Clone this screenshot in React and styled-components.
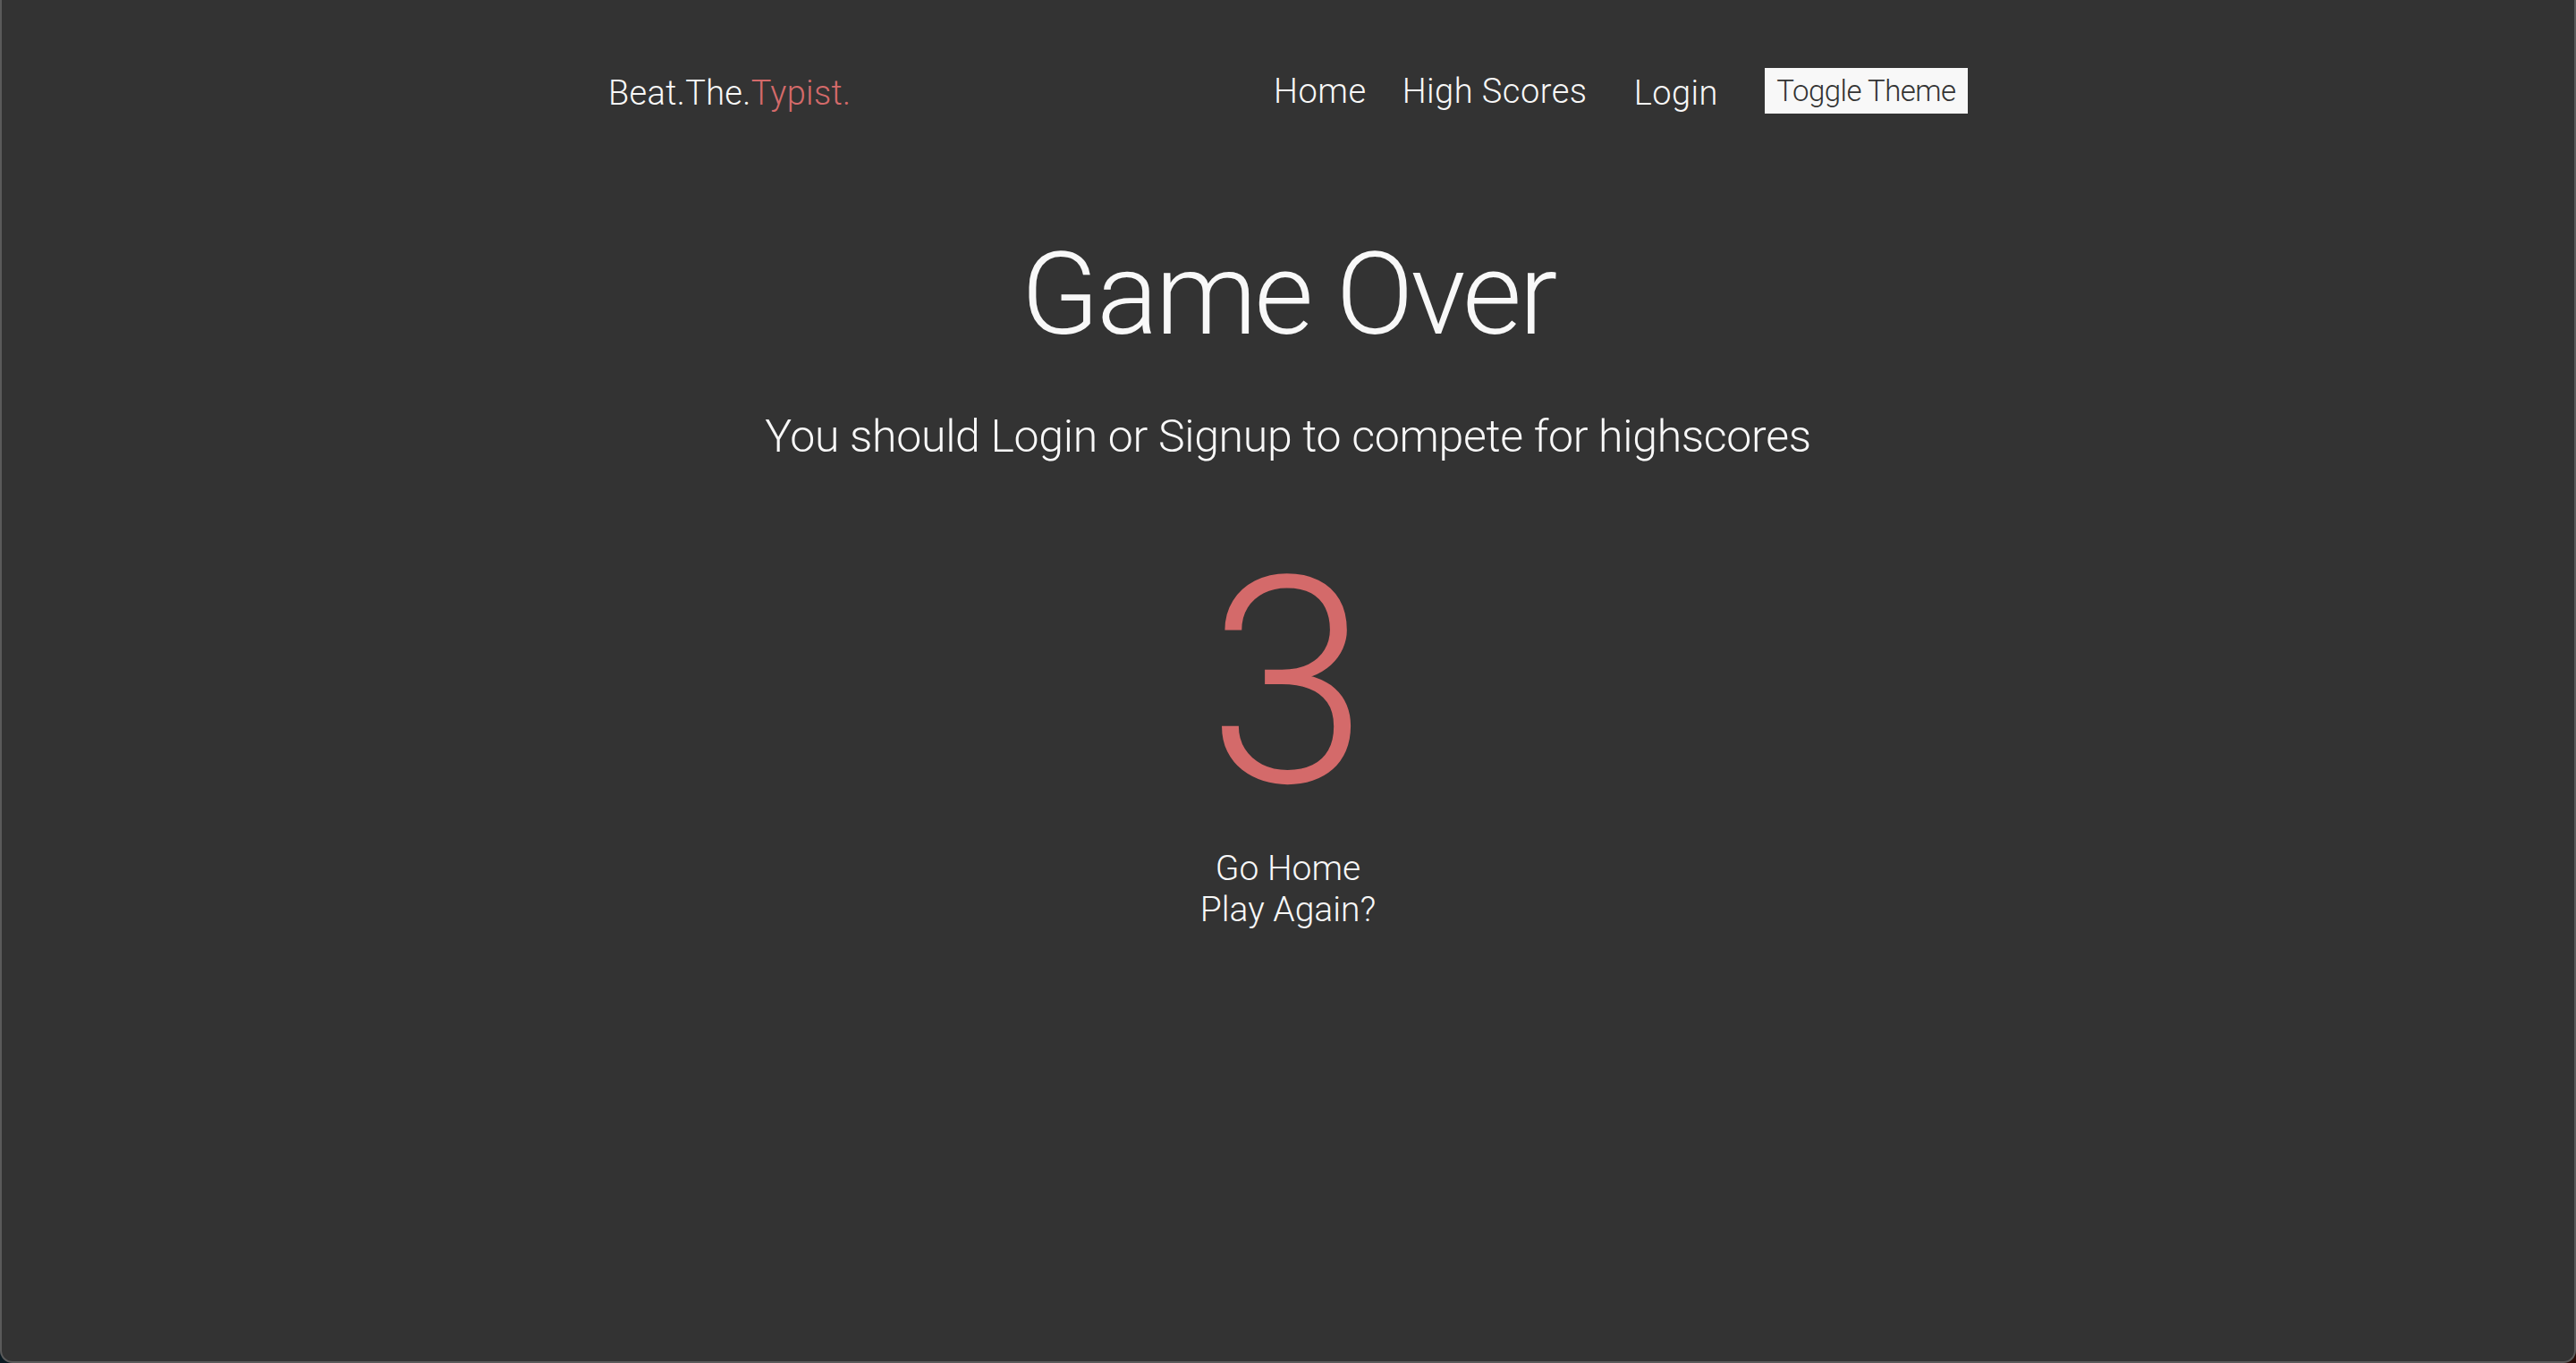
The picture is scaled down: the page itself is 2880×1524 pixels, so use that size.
import styled, { createGlobalStyle } from 'styled-components';

const GlobalStyle = createGlobalStyle`
  html, body {
    margin: 0;
    padding: 0;
    height: 100%;
    background: linear-gradient(90deg, #0b1a22 0%, #2a0d08 100%);
  }
  #root {
    height: 100%;
  }
  * {
    box-sizing: border-box;
  }
`;

const App = () => {
  const score = 3;

  return (
    <>
      <GlobalStyle />
      <WindowStyles>
        <Header>
          <Logo>
            Beat.The.<span>Typist.</span>
          </Logo>
          <Nav>
            <NavLink href="#">Home</NavLink>
            <NavLink href="#">High Scores</NavLink>
            <NavLink href="#" $spaced>
              Login
            </NavLink>
            <ThemeButton type="button">Toggle Theme</ThemeButton>
          </Nav>
        </Header>
        <Main>
          <Title>Game Over</Title>
          <Message>You should Login or Signup to compete for highscores</Message>
          <Score>{score}</Score>
          <Actions>
            <ActionLink href="#">Go Home</ActionLink>
            <ActionLink href="#">Play Again?</ActionLink>
          </Actions>
        </Main>
      </WindowStyles>
    </>
  );
};

const WindowStyles = styled.div`
  height: 100%;
  background: #333333;
  color: #f8f8f8;
  font-family: Roboto, 'Liberation Sans', sans-serif;
  font-weight: 300;
  border: 2px solid #5a5a5a;
  border-top: none;
  border-radius: 0 0 14px 14px;
  overflow: hidden;
`;

const Header = styled.header`
  width: 1520px;
  margin: 0 auto;
  padding-top: 76px;
  display: flex;
  align-items: center;
  justify-content: space-between;
`;

const Logo = styled.div`
  font-size: 38px;
  letter-spacing: 0.3px;
  padding-top: 4px;

  span {
    color: #d46a6a;
  }
`;

const Nav = styled.nav`
  display: flex;
  align-items: center;
  gap: 40px;
`;

const NavLink = styled.a`
  color: #f8f8f8;
  text-decoration: none;
  font-size: 38px;
  letter-spacing: 0.5px;
  margin-left: ${(p) => (p.$spaced ? '12px' : '0')};
  margin-right: ${(p) => (p.$spaced ? '12px' : '0')};
  padding-top: ${(p) => (p.$spaced ? '4px' : '0')};
`;

const ThemeButton = styled.button`
  height: 51px;
  width: 227px;
  padding: 0 12px;
  border: none;
  background: #f8f8f8;
  color: #333333;
  font-family: inherit;
  font-weight: 300;
  font-size: 33px;
  letter-spacing: -0.5px;
`;

const Main = styled.main`
  display: flex;
  flex-direction: column;
  align-items: center;
  text-align: center;
`;

const Title = styled.h1`
  margin: 138px 0 0;
  font-size: 128px;
  font-weight: 300;
  line-height: 1;
  letter-spacing: -3px;
`;

const Message = styled.p`
  margin: 70px 0 0;
  font-size: 50px;
  line-height: 1;
  letter-spacing: -0.3px;
`;

const Score = styled.div`
  margin-top: 114px;
  font-size: 323px;
  line-height: 0.85;
  color: #d46a6a;
`;

const Actions = styled.div`
  margin-top: 46px;
  display: flex;
  flex-direction: column;
  align-items: center;
`;

const ActionLink = styled.a`
  color: #f8f8f8;
  text-decoration: none;
  font-size: 39px;
  line-height: 46px;
`;

export default App;
